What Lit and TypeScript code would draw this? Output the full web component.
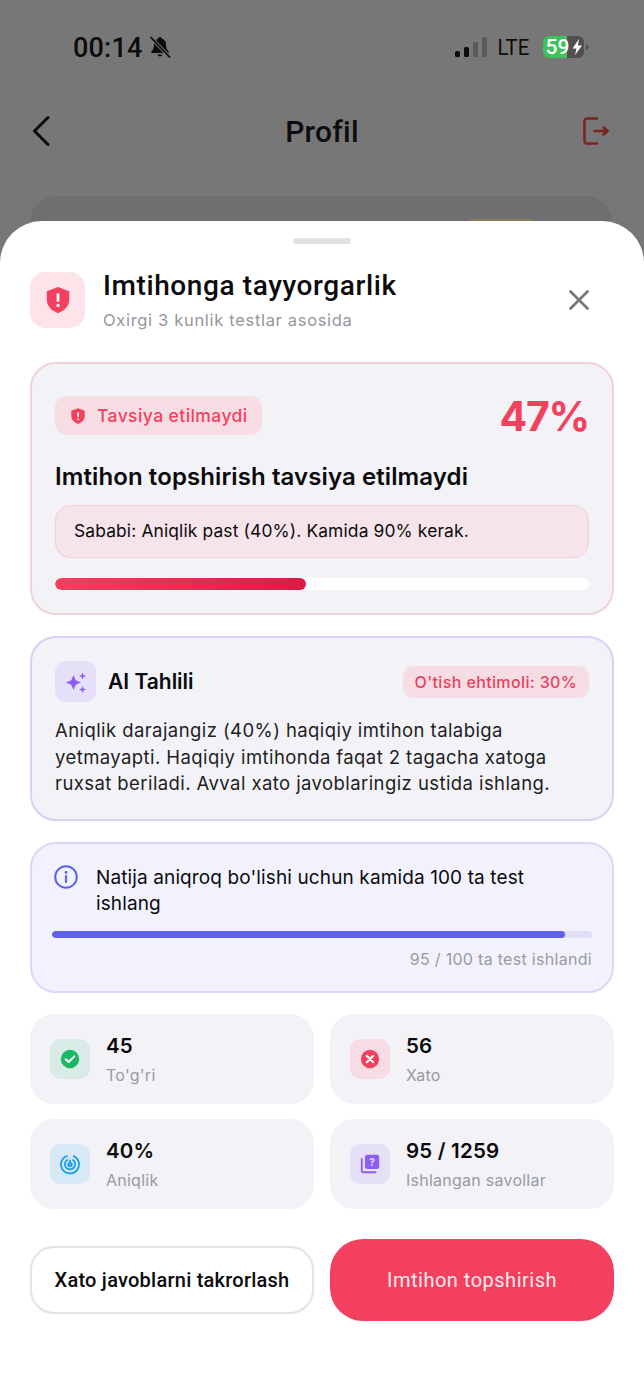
import { LitElement, html, css, svg } from 'lit';
import { customElement } from 'lit/decorators.js';

const shield = (size: number) => html`
  <svg width=${size} height=${size} viewBox="0 0 24 24">
    <path fill="#f4405f" d="M12 1.5 21 5v6.600c0 5.200-3.700 9-9 10.900-5.300-1.900-9-5.700-9-10.900V5z"/>
    <rect x="10.900" y="6.500" width="2.200" height="7" rx="1.100" fill="#fff"/>
    <circle cx="12" cy="16.300" r="1.300" fill="#fff"/>
  </svg>
`;

const stats = [
  {
    value: '45',
    label: "To'g'ri",
    tone: 'green',
    icon: svg`
      <circle cx="12" cy="12" r="10" fill="#17b866"/>
      <path d="M7.300 12.300l3.200 3 6.200-6.200" fill="none" stroke="#fff" stroke-width="2.200" stroke-linecap="round" stroke-linejoin="round"/>`,
  },
  {
    value: '56',
    label: 'Xato',
    tone: 'red',
    icon: svg`
      <circle cx="12" cy="12" r="10" fill="#f4405f"/>
      <path d="M8.500 8.500l7 7m0-7l-7 7" fill="none" stroke="#fff" stroke-width="2.300" stroke-linecap="round"/>`,
  },
  {
    value: '40%',
    label: 'Aniqlik',
    tone: 'blue',
    icon: svg`
      <g fill="none" stroke="#1c9fe6" stroke-width="2" stroke-linecap="round">
        <path d="M8.500 3.300a9.800 9.800 0 1 0 7.500.2"/>
        <path d="M9 7.600a5.600 5.600 0 1 0 6.200.1"/>
        <path d="M12 8v4.500"/>
        <path d="M10.600 11.200a2 2 0 1 0 2.800 0"/>
      </g>`,
  },
  {
    value: '95 / 1259',
    label: 'Ishlangan savollar',
    tone: 'violet',
    icon: svg`
      <path d="M3 6.500V19a2 2 0 0 0 2 2h13" fill="none" stroke="#8b5cf6" stroke-width="2" stroke-linecap="round"/>
      <rect x="6.500" y="2" width="15.500" height="15.500" rx="2.500" fill="#8b5cf6"/>`,
  },
];

@customElement('app-root')
export class AppRoot extends LitElement {
  static styles = css`
    :host {
      display: block;
      height: 1400px;
      overflow: hidden;
      background: #777777;
      font-family: Inter, 'Liberation Sans', sans-serif;
      color: #0b0b0d;
    }

    .top {
      height: 221px;
      overflow: hidden;
      box-sizing: border-box;
      padding-top: 29px;
    }

    .status {
      display: flex;
      align-items: center;
      height: 36px;
      padding: 0 55px 0 73px;
      font-family: Roboto, sans-serif;
    }

    .time {
      padding-top: 2px;
      font-size: 27px;
      font-weight: 500;
      letter-spacing: 0.2px;
      color: #0c0c0c;
    }

    .bell {
      margin-left: 5px;
    }

    .spacer {
      flex: 1;
    }

    .lte {
      margin: 0 12px 0 9px;
      font-size: 22px;
      color: #0c0c0c;
      transform: scaleX(0.92);
    }

    .nav {
      display: grid;
      grid-template-columns: 1fr auto 1fr;
      align-items: center;
      height: 44px;
      margin-top: 44px;
      padding: 0 33px 0 30px;
    }

    .nav svg:last-child {
      justify-self: end;
    }

    .nav h1 {
      margin: 0 0 0 3px;
      font-family: Roboto, sans-serif;
      font-size: 30px;
      font-weight: 500;
      letter-spacing: 0.2px;
      color: #0c0c0c;
    }

    .behind {
      height: 60px;
      margin: 43px 32px 0 30px;
      border-radius: 26px;
      background: #6f6f71;
    }

    .behind i {
      display: block;
      width: 62px;
      height: 2px;
      margin-left: 440px;
      position: relative;
      top: 23px;
      background: #8a7a4e;
    }

    .sheet {
      box-sizing: border-box;
      height: 1179px;
      padding: 17px 30px 0;
      border-radius: 42px 42px 0 0;
      background: #fff;
    }

    .handle {
      width: 58px;
      height: 6px;
      margin: 0 auto 28px;
      border-radius: 3px;
      background: #e2e2e4;
    }

    .head {
      display: flex;
      align-items: flex-start;
      height: 56px;
      margin-bottom: 34px;
    }

    .head-icon {
      display: grid;
      place-items: center;
      width: 55px;
      height: 56px;
      margin-right: 18px;
      border-radius: 15px;
      background: #fde4e8;
    }

    .head-text {
      flex: 1;
    }

    .head-text h2 {
      margin: 0;
      font-family: Roboto, sans-serif;
      font-size: 28px;
      line-height: 28px;
      font-weight: 500;
      letter-spacing: 0.6px;
    }

    .head-text p {
      margin: 10px 0 0;
      font-size: 16.500px;
      line-height: 20px;
      letter-spacing: 0.68px;
      color: #96969c;
    }

    .close {
      margin: 13px 20px 0 0;
    }

    .card {
      box-sizing: border-box;
      margin-bottom: 21px;
      border: 2px solid;
      border-radius: 26px;
      background: #f2f2f7;
    }

    .verdict {
      height: 253px;
      padding: 32px 23px 0;
      border-color: #f0d2db;
    }

    .verdict-top {
      display: flex;
      align-items: center;
      justify-content: space-between;
      height: 39px;
    }

    .badge {
      display: flex;
      align-items: center;
      gap: 10px;
      height: 39px;
      padding: 0 14px;
      border-radius: 12px;
      background: #f5dde3;
      font-size: 17.500px;
      letter-spacing: 0.42px;
      font-weight: 500;
      color: #f4405f;
    }

    .percent {
      font-size: 41px;
      letter-spacing: -1.200px;
      font-weight: 700;
      color: #f4405f;
    }

    .verdict h3 {
      margin: 25px 0 11px;
      font-size: 24px;
      line-height: 34px;
      letter-spacing: 0.1px;
      font-weight: 600;
    }

    .reason {
      box-sizing: border-box;
      height: 53px;
      padding: 0 18px;
      line-height: 49px;
      border: 1.500px solid #f2cfd9;
      border-radius: 15px;
      background: #f5e5ea;
      font-size: 17.400px;
      letter-spacing: 0.14px;
    }

    .bar {
      overflow: hidden;
      border-radius: 6px;
    }

    .bar > div {
      height: 100%;
      border-radius: 6px;
    }

    .verdict .bar {
      height: 12px;
      margin-top: 20px;
      background: #fff;
    }

    .verdict .bar > div {
      background: linear-gradient(90deg, #f4405f, #dc1a47);
    }

    .ai {
      height: 185px;
      padding: 23px 23px 0;
      border-color: #d6d2f2;
    }

    .ai-top {
      display: flex;
      align-items: center;
      height: 41px;
      margin-bottom: 15px;
    }

    .ai-icon {
      display: grid;
      place-items: center;
      width: 41px;
      height: 41px;
      margin-right: 12px;
      border-radius: 11px;
      background: #e5e0f7;
    }

    .ai-title {
      flex: 1;
      font-size: 21px;
      font-weight: 600;
    }

    .chance {
      height: 32px;
      padding: 0 12px;
      line-height: 32px;
      border-radius: 10px;
      background: #f5dde3;
      font-size: 16px;
      letter-spacing: 0.37px;
      font-weight: 500;
      color: #ec3f5f;
    }

    .ai p {
      margin: 0;
      font-size: 18.500px;
      line-height: 26.500px;
      letter-spacing: 0.42px;
      color: #1e1e22;
    }

    .info {
      height: 151px;
      padding: 21px 20px 0;
      border-color: #d9d9f5;
      background: #f2f2fe;
    }

    .info-top {
      display: flex;
      height: 52px;
      margin-bottom: 14px;
    }

    .info-top svg {
      flex: none;
      margin: 0 18px 0 2px;
    }

    .info-top span {
      max-width: 450px;
      font-size: 19px;
      line-height: 26px;
      letter-spacing: 0.12px;
    }

    .info .bar {
      height: 7px;
      background: #dfdff6;
    }

    .info .bar > div {
      background: #5d62e8;
    }

    .count {
      margin-top: 11px;
      text-align: right;
      font-size: 16px;
      line-height: 20px;
      letter-spacing: 0.3px;
      color: #9a9aa2;
    }

    .grid {
      display: grid;
      grid-template-columns: 1fr 1fr;
      gap: 15px 16px;
      margin-bottom: 30px;
    }

    .stat {
      display: flex;
      align-items: center;
      height: 90px;
      padding: 0 20px;
      border-radius: 24px;
      background: #f2f2f7;
    }

    .stat-icon {
      display: grid;
      place-items: center;
      width: 40px;
      height: 40px;
      margin-right: 16px;
      border-radius: 11px;
    }

    .green { background: #d9ebe6; }
    .red { background: #f5dde3; }
    .blue { background: #d7e9f5; }
    .violet { background: #e5e0f7; }

    .stat b {
      display: block;
      margin-top: -1px;
      font-size: 20.500px;
      line-height: 26px;
      letter-spacing: 0.2px;
      font-weight: 600;
    }

    .stat small {
      display: block;
      margin-top: 6px;
      font-size: 16px;
      line-height: 20px;
      letter-spacing: 0.25px;
      color: #9a9aa2;
    }

    .actions {
      display: grid;
      grid-template-columns: 1fr 1fr;
      align-items: center;
      gap: 16px;
    }

    .btn {
      box-sizing: border-box;
      text-align: center;
      font-family: Roboto, sans-serif;
      font-size: 20px;
    }

    .ghost {
      height: 68px;
      line-height: 64px;
      border: 2px solid #e3e3e5;
      border-radius: 24px;
      background: #fff;
      font-weight: 500;
      letter-spacing: 0.24px;
    }

    .solid {
      height: 82px;
      line-height: 82px;
      border-radius: 33px;
      background: #f4405f;
      letter-spacing: 0.5px;
      color: #fde9ed;
    }
  `;

  private renderStatus() {
    return html`
      <div class="status">
        <span class="time">00:14</span>
        <svg class="bell" width="24" height="24" viewBox="0 0 24 24">
          <path fill="#0c0c0c" d="M12 2c-1 0-1.600.7-1.700 1.500C7.500 4.300 6 6.700 6 9.500c0 3.500-.9 5.300-2.600 7-.5.500-.2 1.500.7 1.500h15.800c.9 0 1.200-1 .7-1.500-1.700-1.700-2.600-3.500-2.600-7 0-2.800-1.500-5.200-4.300-6C13.600 2.700 13 2 12 2zM9.500 19.500a2.600 2.600 0 0 0 5 0z"/>
          <path d="M3 2.500 21.500 22" stroke="#777" stroke-width="3.400"/>
          <path d="M3 2.500 21.500 22" stroke="#0c0c0c" stroke-width="1.800" stroke-linecap="round"/>
        </svg>
        <span class="spacer"></span>
        <svg width="32" height="21" viewBox="0 0 32 21">
          <rect x="0" y="14" width="5" height="6" rx="1.500" fill="#0c0c0c"/>
          <rect x="9" y="10" width="5" height="10" rx="1.500" fill="#0c0c0c"/>
          <rect x="18" y="5" width="5" height="15" rx="1.500" fill="#5a5a5a"/>
          <rect x="27" y="0" width="5" height="20" rx="1.500" fill="#5a5a5a"/>
        </svg>
        <span class="lte">LTE</span>
        <svg width="46" height="22" viewBox="0 0 46 22">
          <rect width="41" height="22" rx="6" fill="#505050"/>
          <path d="M6 0h18v22H6a6 6 0 0 1-6-6V6a6 6 0 0 1 6-6z" fill="#3fc25c"/>
          <path d="M43 8c1.500.5 2.500 1.500 2.500 3s-1 2.500-2.500 3z" fill="#505050"/>
          <path d="M36 3 29.500 12.500H33.500L32 19 39 9.500H35z" fill="#fff"/>
          <text x="2.500" y="18" font-family="Roboto, sans-serif" font-size="21" font-weight="500" fill="#fff">59</text>
        </svg>
      </div>
      <div class="nav">
        <svg width="22" height="34" viewBox="0 0 22 34">
          <path d="M18 3.500 4.500 17 18 30.500" fill="none" stroke="#0c0c0c" stroke-width="3" stroke-linecap="round" stroke-linejoin="round"/>
        </svg>
        <h1>Profil</h1>
        <svg width="28" height="30" viewBox="0 0 28 30">
          <path d="M14 2.500H4a2.500 2.500 0 0 0-2.500 2.500v20A2.500 2.500 0 0 0 4 27.500h10" fill="none" stroke="#7c2323" stroke-width="2.600" stroke-linecap="round"/>
          <path d="M11.500 15h13m-4-3.500 4.200 3.500-4.200 3.500" fill="none" stroke="#7c2323" stroke-width="2.600" stroke-linecap="round" stroke-linejoin="round"/>
        </svg>
      </div>
      <div class="behind"><i></i></div>
    `;
  }

  render() {
    return html`
      <div class="top">${this.renderStatus()}</div>
      <div class="sheet">
        <div class="handle"></div>
        <div class="head">
          <div class="head-icon">${shield(30)}</div>
          <div class="head-text">
            <h2>Imtihonga tayyorgarlik</h2>
            <p>Oxirgi 3 kunlik testlar asosida</p>
          </div>
          <svg class="close" width="30" height="30" viewBox="0 0 30 30">
            <path d="M6.500 6.500l17 17M23.500 6.500l-17 17" stroke="#77777b" stroke-width="2.800" stroke-linecap="round"/>
          </svg>
        </div>

        <div class="card verdict">
          <div class="verdict-top">
            <div class="badge">${shield(18)} Tavsiya etilmaydi</div>
            <div class="percent">47%</div>
          </div>
          <h3>Imtihon topshirish tavsiya etilmaydi</h3>
          <div class="reason">Sababi: Aniqlik past (40%). Kamida 90% kerak.</div>
          <div class="bar"><div style="width: 47%"></div></div>
        </div>

        <div class="card ai">
          <div class="ai-top">
            <div class="ai-icon">
              <svg width="24" height="24" viewBox="0 0 24 24" fill="#8b5cf6">
                <path d="M9.500 5 11.700 10.300 17 12.500 11.700 14.700 9.500 20 7.300 14.700 2 12.500 7.300 10.300z"/>
                <path d="M18.500 2.500 19.500 5 22 6 19.500 7 18.500 9.500 17.500 7 15 6 17.500 5z"/>
                <path d="M18.500 16 19.500 18.500 22 19.500 19.500 20.500 18.500 23 17.500 20.500 15 19.500 17.500 18.500z"/>
              </svg>
            </div>
            <div class="ai-title">AI Tahlili</div>
            <div class="chance">O'tish ehtimoli: 30%</div>
          </div>
          <p>Aniqlik darajangiz (40%) haqiqiy imtihon talabiga yetmayapti. Haqiqiy imtihonda faqat 2 tagacha xatoga ruxsat beriladi. Avval xato javoblaringiz ustida ishlang.</p>
        </div>

        <div class="card info">
          <div class="info-top">
            <svg width="24" height="24" viewBox="0 0 24 24">
              <circle cx="12" cy="12" r="10.800" fill="none" stroke="#5d62e8" stroke-width="2"/>
              <path d="M12 11v6" stroke="#5d62e8" stroke-width="2.200" stroke-linecap="round"/>
              <circle cx="12" cy="7.500" r="1.400" fill="#5d62e8"/>
            </svg>
            <span>Natija aniqroq bo'lishi uchun kamida 100 ta test ishlang</span>
          </div>
          <div class="bar"><div style="width: 95%"></div></div>
          <div class="count">95 / 100 ta test ishlandi</div>
        </div>

        <div class="grid">
          ${stats.map(
            (s) => html`
              <div class="stat">
                <div class="stat-icon ${s.tone}">
                  <svg width="22" height="22" viewBox="0 0 24 24">
                    ${s.icon}
                    ${s.tone === 'violet'
                      ? svg`<text x="14.200" y="14" text-anchor="middle" font-family="Inter, sans-serif" font-size="11" font-weight="700" fill="#e5e0f7">?</text>`
                      : ''}
                  </svg>
                </div>
                <div>
                  <b>${s.value}</b>
                  <small>${s.label}</small>
                </div>
              </div>
            `,
          )}
        </div>

        <div class="actions">
          <div class="btn ghost">Xato javoblarni takrorlash</div>
          <div class="btn solid">Imtihon topshirish</div>
        </div>
      </div>
    `;
  }
}
